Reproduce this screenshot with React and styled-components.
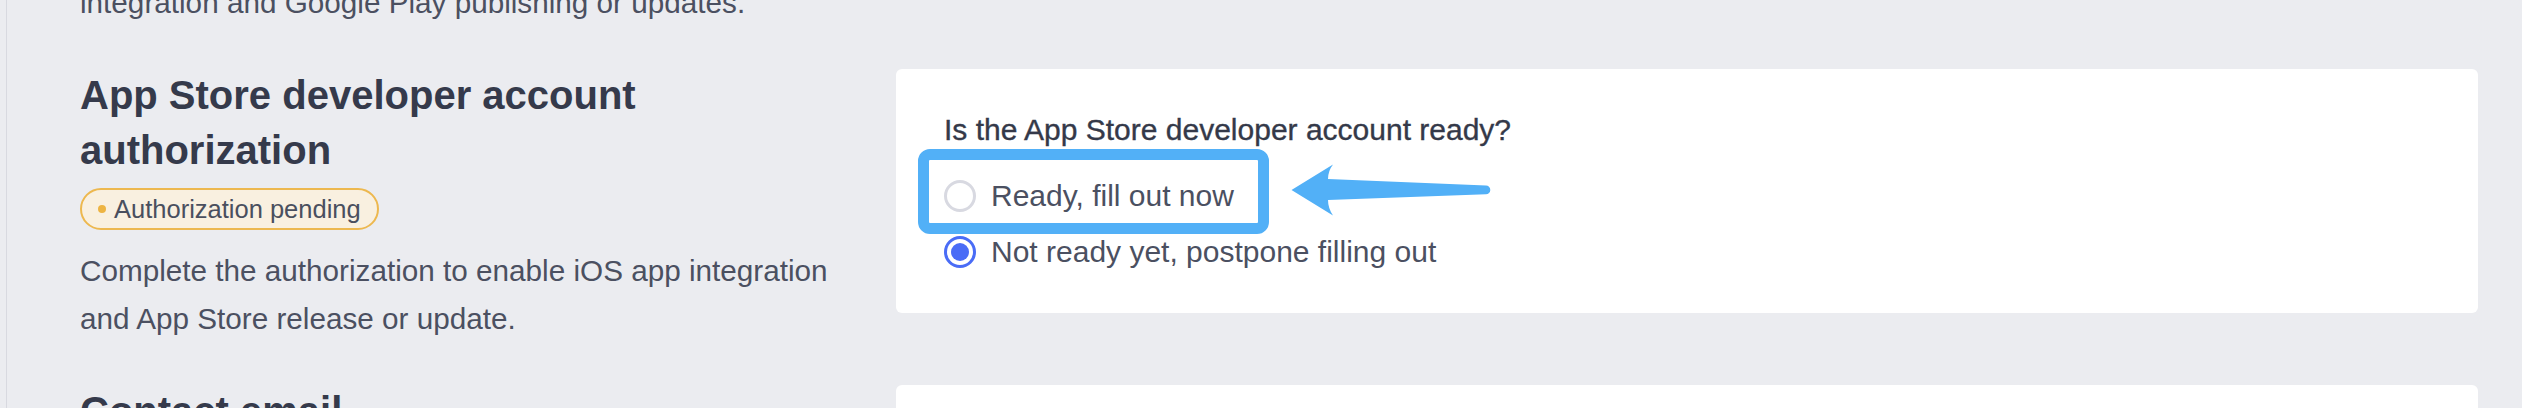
import React from "react";
import styled, { createGlobalStyle } from "styled-components";

const GlobalStyle = createGlobalStyle`
  html, body {
    margin: 0;
    padding: 0;
    background: #ebecf0;
  }
  body {
    font-family: "Liberation Sans", Arial, sans-serif;
    overflow: hidden;
  }
  * { box-sizing: border-box; }
`;

const Page = styled.div`
  margin-left: 6px;
  border-left: 1px solid #d8d9e0;
  padding: 0 44px 0 73px;
  min-height: 408px;
  display: flex;
  flex-direction: column;
  gap: 41px;
`;

const Section = styled.section`
  display: grid;
  grid-template-columns: 760px 1fr;
  column-gap: 56px;
  align-items: start;
`;

const Info = styled.div`
  display: flex;
  flex-direction: column;
  align-items: flex-start;
`;

const Title = styled.h2`
  margin: 0;
  font-size: 40px;
  line-height: 55px;
  font-weight: 700;
  color: #353a4b;
`;

const Badge = styled.span`
  margin-top: 10px;
  display: inline-flex;
  align-items: center;
  gap: 8px;
  height: 42px;
  padding: 0 16px 0 16px;
  border: 2px solid #edb84f;
  border-radius: 21px;
  background: #f9f0e0;
  font-size: 25.5px;
  color: #4a4f5e;
`;

const Dot = styled.span`
  width: 8px;
  height: 8px;
  border-radius: 50%;
  background: #edb443;
`;

const Description = styled.p`
  margin: ${(p) => (p.$tail ? "-21px 0 0" : "17px 0 0")};
  font-size: 29.7px;
  line-height: 48px;
  color: #4b5061;
`;

const Card = styled.div`
  position: relative;
  margin-top: 1px;
  background: #ffffff;
  border-radius: 6px;
  padding: 40px 48px 37px;
  min-height: 244px;
`;

const Question = styled.div`
  font-size: 30px;
  line-height: 42px;
  color: #343949;
  -webkit-text-stroke: 0.35px #343949;
`;

const Options = styled.div`
  margin-top: 21px;
  display: flex;
  flex-direction: column;
  gap: 8px;
`;

const Option = styled.label`
  display: flex;
  align-items: center;
  gap: 15px;
  height: 48px;
  font-size: 30px;
  line-height: 48px;
  color: #4b5061;
`;

const Radio = styled.span`
  flex: none;
  width: 32px;
  height: 32px;
  border-radius: 50%;
  background: #fff;
  border: ${(p) => (p.$checked ? "3.5px solid #4a6cf6" : "3px solid #d8d9e1")};
  display: flex;
  align-items: center;
  justify-content: center;
  &::after {
    content: "";
    display: ${(p) => (p.$checked ? "block" : "none")};
    width: 18px;
    height: 18px;
    border-radius: 50%;
    background: #4a6cf6;
  }
`;

const Highlight = styled.div`
  position: absolute;
  left: 22px;
  top: 80px;
  width: 351px;
  height: 85px;
  border: 11.5px solid #52b0f7;
  border-radius: 12px;
  pointer-events: none;
`;

const Arrow = styled.svg`
  position: absolute;
  left: 389px;
  top: 90px;
  width: 215px;
  height: 62px;
  overflow: visible;
  pointer-events: none;
`;

export default function App() {
  return (
    <>
      <GlobalStyle />
      <Page>
        <Description $tail>
          integration and Google Play publishing or updates.
        </Description>

        <Section>
          <Info>
            <Title>App Store developer account authorization</Title>
            <Badge>
              <Dot />
              Authorization pending
            </Badge>
            <Description>
              Complete the authorization to enable iOS app integration and App
              Store release or update.
            </Description>
          </Info>
          <Card>
            <Question>Is the App Store developer account ready?</Question>
            <Options>
              <Option>
                <Radio />
                Ready, fill out now
              </Option>
              <Option>
                <Radio $checked />
                Not ready yet, postpone filling out
              </Option>
            </Options>
            <Highlight />
            <Arrow viewBox="0 0 215 62">
              <path
                d="M6.5 31 L48 5.5 Q43 12 43 20 L201 26.6 A4.3 4.3 0 0 1 201 35.2 L43 41 Q43 49 48 56.5 Z"
                fill="#52b0f7"
              />
            </Arrow>
          </Card>
        </Section>

        <Section>
          <Info>
            <Title>Contact email</Title>
          </Info>
          <Card />
        </Section>
      </Page>
    </>
  );
}
